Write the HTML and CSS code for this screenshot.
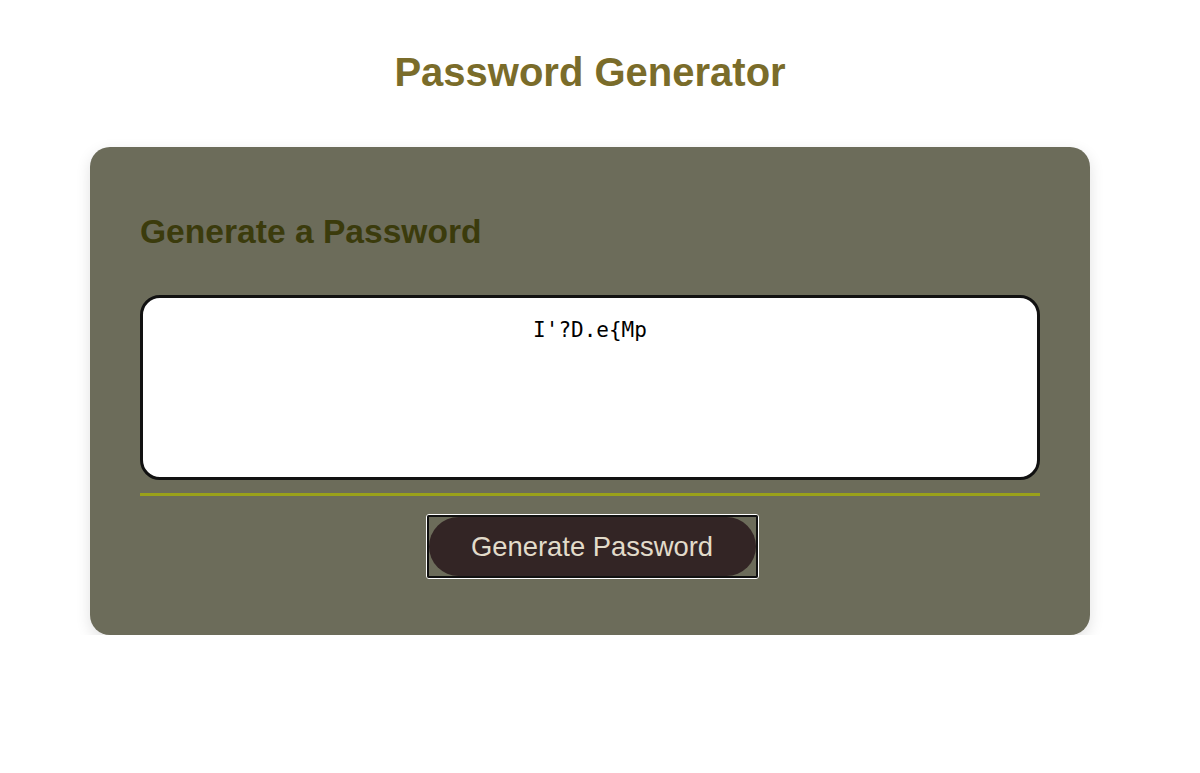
FILE: index.html
```html
<!DOCTYPE html>
<html lang="en">
<head>
<meta charset="UTF-8">
<title>Password Generator</title>
<link rel="stylesheet" href="styles.css">
</head>
<body>
<div class="page">
  <h1 class="title">Password Generator</h1>
  <div class="card">
    <div class="card-header">
      <h2 class="card-title">Generate a Password</h2>
    </div>
    <div class="card-body">
      <textarea class="password" readonly aria-label="Generated Password">I'?D.e{Mp</textarea>
    </div>
    <div class="card-footer">
      <span class="btn-ring-outer"><span class="btn-ring-inner"><button class="btn" type="button">Generate Password</button></span></span>
    </div>
  </div>
</div>
</body>
</html>
```

FILE: styles.css
```css
* {
  box-sizing: border-box;
}

html, body {
  margin: 0;
  padding: 0;
  background: #ffffff;
  font-family: "Liberation Sans", Arial, sans-serif;
}

.page {
  width: 1180px;
  padding-top: 50px;
}

.title {
  margin: 0 0 52px;
  text-align: center;
  font-size: 40px;
  font-weight: 700;
  color: #7a6c2a;
}

.card {
  width: 1000px;
  margin: 0 auto;
  padding: 66px 50px 56px;
  background: #6c6c5a;
  border-radius: 20px;
  box-shadow: 0 5px 15px rgba(0, 0, 0, 0.12);
}

.card-header {
  margin-bottom: 44px;
}

.card-title {
  margin: 0;
  font-size: 33.6px;
  font-weight: 700;
  color: #3b3b0c;
}

.card-body {
  display: flex;
}

.password {
  display: block;
  width: 100%;
  height: 185px;
  padding: 20px 16px;
  border: 3px solid #111111;
  border-radius: 20px;
  background: #ffffff;
  color: #000000;
  font-family: "DejaVu Sans Mono", "Liberation Mono", monospace;
  font-size: 21px;
  text-align: center;
  resize: none;
  outline: none;
}

.card-footer {
  display: flex;
  justify-content: center;
  margin-top: 13px;
  padding-top: 18px;
  padding-left: 4px;
  border-top: 3px solid #9aa11a;
}

.btn-ring-outer {
  display: flex;
  border: 1px solid #ffffff;
  border-radius: 3px;
}

.btn-ring-inner {
  display: flex;
  border: 2px solid #111111;
  border-radius: 2px;
}

.btn {
  width: 327px;
  height: 59px;
  border: none;
  border-radius: 30px;
  background: #332525;
  color: #e2dbca;
  font-family: "Liberation Sans", Arial, sans-serif;
  font-size: 27.4px;
  cursor: pointer;
}
```
